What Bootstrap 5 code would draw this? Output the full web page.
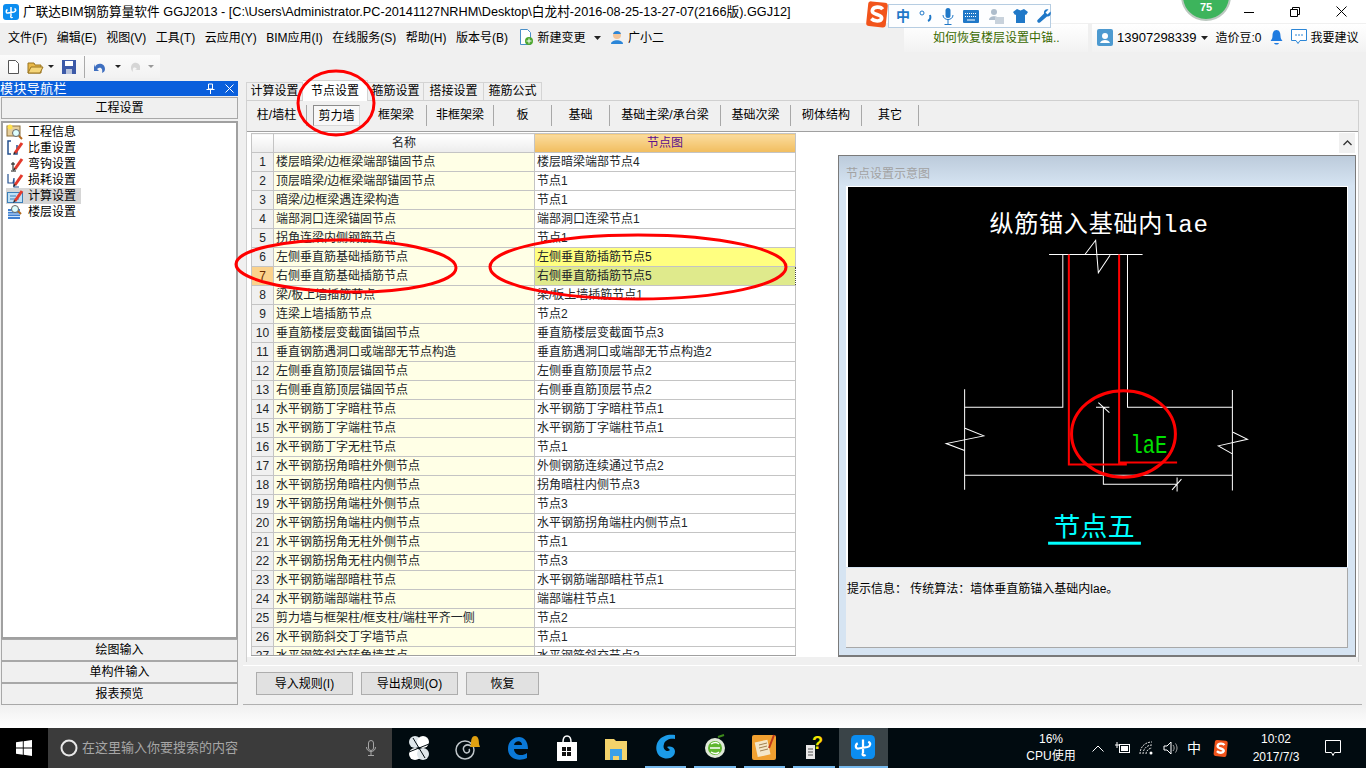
<!DOCTYPE html>
<html lang="zh-CN">
<head>
    <meta charset="UTF-8">
    <title>广联达BIM钢筋算量软件 GGJ2013</title>
    <link href="https://cdn.jsdelivr.net/npm/bootstrap@5.3.3/dist/css/bootstrap.min.css" rel="stylesheet">
    <style>
        html, body { height: 768px; overflow: hidden; }
        body { width: 1366px; background: #f0f0f0; color: #000; font: 12px/16px "Liberation Sans", "Noto Sans CJK SC", sans-serif; position: relative; }
        svg { display: block; flex: none; }

        .title-row { height: 23px; background: #fff; font-size: 12.7px; padding-left: 3px; }
        .win-btn { width: 46px; height: 23px; }
        .win-wrap { margin-right: 2px; }
        .menu-row { height: 29px; padding-left: 8px; column-gap: 9.500px; }
        .hint-box { width: 184px; height: 28px; margin-right: 4px; background: linear-gradient(#fff, #f2f2f2); color: #3a6a00; padding-left: 29px; }
        .user-box { width: 274px; height: 28px; background: linear-gradient(#fff, #f2f2f2); padding-left: 5px; }
        .user-num { font-size: 13px; }
        .tool-row { height: 28px; }
        .tool-inner { height: 23px; width: 160px; margin-top: 3px; background: linear-gradient(#fbfbfb, #f2f2f2); padding-left: 8px; }
        .tool-sep { height: 22px; border-left: 1px solid #aaa; }

        .mid-row { height: 625px; }
        .nav-side { width: 238px; }
        .nav-head { height: 15px; margin-top: 1px; background: #0a5fdc; color: #fff; font-size: 13px; line-height: 15px; letter-spacing: .4px; }
        .nav-close { margin: 0 4px 0 10px; }
        .nav-btn { height: 22px; margin-left: 1px; background: #f0f0f0; border: 1px solid #a8a8a8; line-height: 21px; text-align: center; }
        .nav-top { margin-top: 1px; }
        .nav-list { height: 518px; margin: 2px 0 0 1px; background: #fff; border: 2px solid #a0a0a0; padding: 1px 0 0 3px; }
        .nav-item { height: 16px; line-height: 16px; }
        .nav-item svg { margin-right: 4px; }
        .nav-item span { padding-right: 4px; }
        .nav-on { background: #d6d6d6; width: 75px; }

        .work-side { margin-left: 5px; width: 1119px; }
        .tab-strip { height: 20px; padding: 2px 0 0 3px; display: grid; grid-template-columns: 57px 65px 56px 60px 58px; justify-content: start; }
        .tab-one { height: 18px; border: 1px solid #d4d4d4; border-left: 0; border-bottom: 0; background: #f0f0f0; line-height: 17px; text-align: center; }
        .tab-first { border-left: 1px solid #d4d4d4; }
        .tab-cur { background: #fff; height: 21px; margin-top: -2px; position: relative; z-index: 1; line-height: 20px; }
        .work-panel { height: 562px; margin-left: 3px; width: 1113px; background: #f0f0f0; border: 1px solid #d0d0d0; border-bottom: 0; }
        .sub-strip { height: 31px; background: #f0f0f0; border-bottom: 1px solid #a0a0a0; display: grid; grid-template-columns: 60px 59px 61px 67px 58px 58px 111px 70px 71px 57px; padding-top: 4px; }
        .sub-one { height: 21px; line-height: 21px; text-align: center; border-right: 1px solid #a8a8a8; }
        .sub-cur { width: 47px; justify-self: center; background: #f8f8f8; border: 1px solid #8c8c8c; border-right-color: #d8d8d8; border-bottom-color: #d8d8d8; }
        .work-body { height: 525px; background: #fff; }
        .grid-wrap { width: 545px; height: 523px; margin: 1px 0 0 4px; overflow: hidden; border-bottom: 1px solid #a0a0a0; }
        .node-grid.table { width: 544px; table-layout: fixed; border-collapse: collapse; --bs-table-bg: transparent; border-color: #c4c4c4; }
        .node-grid.table > :not(caption) > * > * { padding: 0 2px; height: 19px; line-height: 18px; font-size: 12px; white-space: nowrap; overflow: hidden; border: 1px solid #c4c4c4; box-shadow: none; }
        .node-grid.table > :not(caption) > * > .num-cell { text-align: center; background: #f0f0f0; padding: 0; }
        .node-grid.table > :not(caption) > * > .num-hot { background: #fbd28c; color: #6a2a00; }
        .node-grid.table > :not(caption) > * > .name-cell { background: #ffffe6; }
        .node-grid.table > :not(caption) > * > .val-six { background: #ffff80; }
        .node-grid.table > :not(caption) > * > .val-seven { background: #dfea8c; border: 1px dotted #444; }
        .node-grid.table > thead > tr > .head-plain { background: linear-gradient(#fff, #ececec); text-align: center; font-weight: 400; }
        .node-grid.table > thead > tr > .head-hot { background: linear-gradient(#fbdc9e, #f1bd5e); color: #5b0f8c; text-align: center; font-weight: 400; }
        .col-num { width: 22px; }
        .col-name { width: 261px; }
        .col-val { width: 261px; }

        .right-part { margin-left: 42px; width: 518px; }
        .scroll-row { height: 23px; padding-right: 1px; }
        .scroll-up { width: 16px; height: 20px; margin-top: 1px; background: #f0f0f0; }
        .demo-box { height: 502px; background: #d6e4f2; border: 1px solid #7a7a7a; border-bottom-width: 2px; padding: 0 7px; }
        .demo-title { height: 30px; margin: 0 -7px; padding: 10px 0 0 7px; line-height: 16px; color: #a2a2a2; background: linear-gradient(#bccbdb, #d6e4f2); }
        .demo-frame { width: 502px; background: #fff; padding: 1px 1px 0 2px; }
        .tip-box { width: 502px; height: 80px; margin-top: 1px; background: #f0f0f0; border-right: 1px solid #a8a8a8; border-bottom: 1px solid #a8a8a8; padding: 13px 0 0 1px; }
        .work-foot { height: 5px; }

        .btn-bar { height: 40px; margin-top: 3px; background: #f0f0f0; border-top: 1px solid #fff; border-bottom: 1px solid #b0b0b0; padding: 6px 0 0 13px; column-gap: 8px; }
        .btn-rule { height: 23px; padding: 0; border-radius: 0; font-size: 12px; line-height: 20px; color: #000; background: #e1e1e1; border: 1px solid #adadad; }
        .btn-wide { width: 97px; }
        .btn-slim { width: 73px; }

        .fade-row { height: 23px; background: linear-gradient(#f0f0f0, #fff); }
        .task-row { height: 40px; background: #010b10; color: #fff; }
        .task-start { width: 48px; background: #000; }
        .task-search { width: 344px; background: #3b3b3b; color: #a6a6a6; font-size: 13px; padding-left: 12px; }
        .task-mic { margin-right: 16px; }
        .task-app { width: 49.4px; height: 40px; }
        .task-open { width: 41.4px; margin: 0 4px; border-bottom: 2px solid #76b9ed; }
        .task-now { background: #3a4448; border-bottom: 2px solid #76b9ed; }
        .task-first { margin-left: 2px; }
        .cpu-box { width: 70px; text-align: center; line-height: 17px; }
        .tray-one { width: 24px; }
        .tray-big { font-size: 14px; }
        .tray-logo { padding-left: 6px; }
        .clock-box { width: 80px; margin-left: 6px; text-align: center; line-height: 18px; }
        .note-box { width: 34px; margin-right: 16px; }

        .ime-bar { position: absolute; left: 888px; top: 4px; width: 163px; height: 24px; background: #fdfeff; border: 1px solid #b6cde2; padding-left: 7px; column-gap: 9px; }
        .ime-zh { color: #1f78c8; font-size: 14px; font-weight: 700; }
        .ime-logo { position: absolute; left: 866px; top: 0; }
        .ball-top { position: absolute; left: 1181px; top: 0; }
        .red-marks { position: absolute; left: 0; top: 0; pointer-events: none; z-index: 5; }
    </style>
</head>
<body class="d-flex flex-column">

    <svg class="d-none">
        <symbol id="app-logo" viewBox="0 0 16 16">
            <rect width="16" height="16" rx="3" fill="#0b8df0"/>
            <path d="M8 3v9M4.5 5.500c-2 1-1.500 4 .5 3.500l6-1c2-.5 2.500-2.500.5-3.500M8 12c-1 1.500 1 2 1.500 1" fill="none" stroke="#fff" stroke-width="1.500"/>
        </symbol>
        <symbol id="red-pen" viewBox="0 0 18 16">
            <path d="M9 13l7-10" stroke="#e33a2c" stroke-width="3"/>
            <path d="M7 15l1-3 2 1z" fill="#222"/>
        </symbol>
        <symbol id="sogou-s" viewBox="0 0 22 28">
            <rect x="1" y="2" width="19" height="24" rx="3" fill="#f2541b" transform="rotate(6 11 14)"/>
            <path d="M16 9c-2-3-9-3-10 1-1 5 10 3 9 8-1 3-7 3-10 0" fill="none" stroke="#fff" stroke-width="3.500"/>
        </symbol>
    </svg>

    <!-- title bar -->
    <div class="title-row d-flex align-items-center flex-none">
        <svg width="16" height="16" class="me-1"><use href="#app-logo"/></svg>
        <span class="text-nowrap">广联达BIM钢筋算量软件 GGJ2013 - [C:\Users\Administrator.PC-20141127NRHM\Desktop\白龙村-2016-08-25-13-27-07(2166版).GGJ12]</span>
        <div class="win-wrap d-flex ms-auto">
            <div class="win-btn d-flex align-items-center justify-content-center"><svg width="10" height="10"><path d="M0 5.500h10" stroke="#000"/></svg></div>
            <div class="win-btn d-flex align-items-center justify-content-center"><svg width="10" height="10"><path d="M.5 2.500h7v7h-7zM2.500 2.500v-2h7v7h-2" fill="none" stroke="#000"/></svg></div>
            <div class="win-btn d-flex align-items-center justify-content-center"><svg width="11" height="11"><path d="M.5.500l10 10M10.500.500l-10 10" stroke="#000"/></svg></div>
        </div>
    </div>

    <!-- menu bar -->
    <div class="menu-row d-flex align-items-center text-nowrap">
        <span>文件(F)</span><span>编辑(E)</span><span>视图(V)</span><span>工具(T)</span><span>云应用(Y)</span><span>BIM应用(I)</span><span>在线服务(S)</span><span>帮助(H)</span><span>版本号(B)</span>
        <span class="d-flex align-items-center gap-1">
            <svg width="16" height="17"><path d="M2.500.500h7l3 3v12h-10z" fill="#fff" stroke="#4a8fc8"/><circle cx="11" cy="12" r="4" fill="#4ea72e"/><path d="M11 9.500v5M8.500 12h5" stroke="#fff"/></svg>
            新建变更
            <svg width="7" height="4" class="ms-1"><path d="M0 0h7l-3.500 4z" fill="#222"/></svg>
        </span>
        <span class="d-flex align-items-center gap-1">
            <svg width="14" height="15"><circle cx="7" cy="5" r="4" fill="#f3c59a"/><path d="M1 14c0-5 12-5 12 0z" fill="#2b86d8"/><path d="M3 4c1-4 7-4 8 0z" fill="#2b86d8"/></svg>
            广小二
        </span>
        <div class="ms-auto d-flex">
            <div class="hint-box d-flex align-items-center">如何恢复楼层设置中锚..</div>
            <div class="user-box d-flex align-items-center">
                <svg width="16" height="17" class="me-1"><rect width="16" height="17" rx="2" fill="#4d9ad0"/><circle cx="8" cy="7" r="3" fill="#fff"/><path d="M3 14c1-4 9-4 10 0z" fill="#fff"/></svg>
                <span class="user-num">13907298339</span>
                <svg width="7" height="4" class="mx-1"><path d="M0 0h7l-3.500 4z" fill="#222"/></svg>
                <span class="ms-1">造价豆:0</span>
                <svg width="13" height="17" class="ms-2"><path d="M6.500 1c-3 0-4 3-4 6 0 3-1.500 4-2 5h12c-.5-1-2-2-2-5 0-3-1-6-4-6z" fill="#1f7be0"/><path d="M4 14c1 2 4 2 5 0z" fill="#1f7be0"/></svg>
                <svg width="16" height="17" class="ms-2"><path d="M.5.500h15v11H9l-2 3-2-3H.5z" fill="#fff" stroke="#2c86d6"/><path d="M4 6h8" stroke="#2c86d6" stroke-dasharray="2 1"/></svg>
                <span class="ms-1">我要建议</span>
            </div>
        </div>
    </div>

    <!-- toolbar -->
    <div class="tool-row">
        <div class="tool-inner d-flex align-items-center">
            <svg width="11" height="14"><path d="M.5.500h7l3 3v10H.5z" fill="#fff" stroke="#555"/></svg>
            <svg width="17" height="14" class="ms-2"><path d="M1 3h6l1 2h6v8H1z" fill="#e9b949" stroke="#9a7420"/><path d="M1 13l3-6h12l-3 6z" fill="#f5d67a" stroke="#9a7420"/></svg>
            <svg width="6" height="3" class="ms-1"><path d="M0 0h6l-3 3z" fill="#222"/></svg>
            <svg width="14" height="14" class="ms-2"><rect width="14" height="14" fill="#3c5aa8"/><rect x="3" y="1" width="8" height="5" fill="#fff"/><rect x="4" y="9" width="6" height="5" fill="#b9c4dc"/></svg>
            <div class="tool-sep ms-2"></div>
            <svg width="14" height="14" class="ms-2"><path d="M2 7c2-5 10-4 10 2 0 2-1 3-3 4 1-4-1-7-5-4l2 2H1V4z" fill="#3f6fc0"/></svg>
            <svg width="6" height="3" class="ms-2"><path d="M0 0h6l-3 3z" fill="#222"/></svg>
            <svg width="11" height="13" class="ms-2"><path d="M11 6C9 1 2 2 2 8c0 2 1 3 2 4-1-4 1-6 4-3L6 10h5z" fill="#d6d6d6"/></svg>
            <svg width="6" height="3" class="ms-2"><path d="M0 0h6l-3 3z" fill="#999"/></svg>
        </div>
    </div>

    <div class="mid-row d-flex">
        <!-- module navigator -->
        <div class="nav-side d-flex flex-column">
            <div class="nav-head d-flex align-items-center">
                <span>模块导航栏</span>
                <svg width="9" height="11" class="ms-auto"><path d="M2.500 1h4v5h-4zM.5 6.500h8M4.500 6.500V11" fill="none" stroke="#fff"/></svg>
                <svg width="9" height="9" class="nav-close"><path d="M.5.500l8 8M8.500.500l-8 8" stroke="#fff"/></svg>
            </div>
            <div class="nav-btn nav-top">工程设置</div>
            <div class="nav-list">
                <div class="nav-item d-flex">
                    <svg width="18" height="16"><rect x="1" y="2" width="13" height="10" fill="#e6cf9c" stroke="#8a6f3a"/><circle cx="4" cy="3" r="2.500" fill="#ffe14d"/><circle cx="10" cy="9" r="3.500" fill="#dff" stroke="#666"/><path d="M13 12l3 3" stroke="#b06a20" stroke-width="2"/></svg>
                    <span>工程信息</span>
                </div>
                <div class="nav-item d-flex">
                    <svg width="18" height="16"><path d="M5 1H2v13h3M8 14h3V5" fill="none" stroke="#24508f" stroke-width="1.500"/><use href="#red-pen" width="18" height="16"/></svg>
                    <span>比重设置</span>
                </div>
                <div class="nav-item d-flex">
                    <svg width="18" height="16"><path d="M7 6v8M5 8h4M5 15h5" stroke="#111"/><use href="#red-pen" width="18" height="16"/></svg>
                    <span>弯钩设置</span>
                </div>
                <div class="nav-item d-flex">
                    <svg width="18" height="16"><path d="M2 2v9h5l1-5v9h5" fill="none" stroke="#24508f" stroke-width="1.200"/><use href="#red-pen" width="18" height="16"/></svg>
                    <span>损耗设置</span>
                </div>
                <div class="nav-item d-flex nav-on">
                    <svg width="18" height="16"><rect x="1.500" y="4.500" width="15" height="10" fill="#bfe0f5" stroke="#3c7fb8"/><path d="M4 8h6M4 11h9" stroke="#3c7fb8"/><use href="#red-pen" width="18" height="16"/></svg>
                    <span>计算设置</span>
                </div>
                <div class="nav-item d-flex">
                    <svg width="18" height="16"><rect x="2" y="5" width="12" height="10" fill="#3f7fd0"/><path d="M2 7.500h12M2 10h12M2 12.500h12" stroke="#cfe6fb"/><circle cx="9" cy="5" r="3.500" fill="#dff" stroke="#666"/><path d="M12 7l3 3" stroke="#b06a20" stroke-width="2"/></svg>
                    <span>楼层设置</span>
                </div>
            </div>
            <div class="nav-btn">绘图输入</div>
            <div class="nav-btn">单构件输入</div>
            <div class="nav-btn">报表预览</div>
        </div>

        <!-- settings -->
        <div class="work-side d-flex flex-column">
            <div class="tab-strip">
                <div class="tab-one tab-first">计算设置</div>
                <div class="tab-one tab-cur">节点设置</div>
                <div class="tab-one">箍筋设置</div>
                <div class="tab-one">搭接设置</div>
                <div class="tab-one">箍筋公式</div>
            </div>
            <div class="work-panel">
                <div class="sub-strip">
                    <div class="sub-one">柱/墙柱</div>
                    <div class="sub-one sub-cur">剪力墙</div>
                    <div class="sub-one">框架梁</div>
                    <div class="sub-one">非框架梁</div>
                    <div class="sub-one">板</div>
                    <div class="sub-one">基础</div>
                    <div class="sub-one">基础主梁/承台梁</div>
                    <div class="sub-one">基础次梁</div>
                    <div class="sub-one">砌体结构</div>
                    <div class="sub-one">其它</div>
                </div>
                <div class="work-body d-flex">
                    <div class="grid-wrap flex-none">
                        <table class="table node-grid mb-0">
                            <colgroup><col class="col-num"><col class="col-name"><col class="col-val"></colgroup>
                            <thead><tr><th class="head-plain"></th><th class="head-plain">名称</th><th class="head-hot">节点图</th></tr></thead>
                            <tbody id="filas"></tbody>
                        </table>
                    </div>
                    <div class="right-part d-flex flex-column">
                        <div class="scroll-row d-flex justify-content-end">
                            <div class="scroll-up d-flex align-items-center justify-content-center"><svg width="9" height="6"><path d="M.5 5l4-4 4 4" fill="none" stroke="#333" stroke-width="1.300"/></svg></div>
                        </div>
                        <div class="demo-box">
                            <div class="demo-title">节点设置示意图</div>
                            <div class="demo-frame">
                                <svg width="499" height="380" viewBox="23 80 1489 1142" preserveAspectRatio="none">
                                    <rect x="23" y="80" width="1489" height="1142" fill="#000"/>
                                    <g fill="none" stroke="#fff" stroke-width="3">
                                        <path d="M623 283H902M730 283L762 240L770 338L805 285"/>
                                        <path d="M664 283V742H371M857 283V742H1170"/>
                                        <path d="M371 688V990M1170 690V992M371 946H1170"/>
                                        <path d="M372 805L428 828L316 851L371 872M1172 817L1215 838L1128 858L1170 882"/>
                                        <path d="M785 742V973H1005M763 742H803M770 728L803 758M1005 953V995M1018 958L990 990"/>
                                    </g>
                                    <g fill="none" stroke="#f00" stroke-width="6">
                                        <path d="M682 283V914H855M832 283V908H1005"/>
                                        <ellipse cx="845" cy="822" rx="155" ry="130" stroke-width="9"/>
                                    </g>
                                    <text x="445" y="216" fill="#fff" font-size="72" textLength="652" font-family="Liberation Mono, Noto Sans CJK SC, monospace">纵筋锚入基础内lae</text>
                                    <text x="866" y="880" fill="#00e000" font-size="78" textLength="110" lengthAdjust="spacingAndGlyphs" font-family="Liberation Mono, monospace">laE</text>
                                    <text x="636" y="1130" fill="#00ffff" font-size="80" textLength="242" font-family="Noto Sans CJK SC, sans-serif">节点五</text>
                                    <rect x="620" y="1146" width="277" height="9" fill="#00ffff"/>
                                </svg>
                            </div>
                            <div class="tip-box">提示信息： 传统算法：墙体垂直筋锚入基础内lae。</div>
                        </div>
                    </div>
                </div>
                <div class="work-foot"></div>
            </div>
            <div class="btn-bar d-flex">
                <button type="button" class="btn btn-rule btn-wide">导入规则(I)</button>
                <button type="button" class="btn btn-rule btn-wide">导出规则(O)</button>
                <button type="button" class="btn btn-rule btn-slim">恢复</button>
            </div>
        </div>
    </div>

    <div class="fade-row"></div>

    <!-- windows taskbar -->
    <div class="task-row d-flex align-items-center">
        <div class="task-start h-100 d-flex align-items-center justify-content-center">
            <svg width="16" height="16"><path d="M0 2.300l6.800-1v6.300H0zM7.700 1.200L16 0v7.600H7.700zM0 8.400h6.800v6.300L0 13.700zM7.700 8.400H16V16l-8.300-1.200z" fill="#fff"/></svg>
        </div>
        <div class="task-search h-100 d-flex align-items-center">
            <svg width="18" height="18" class="me-1 flex-none"><circle cx="9" cy="9" r="7.500" fill="none" stroke="#e8e8e8" stroke-width="2"/></svg>
            <span>在这里输入你要搜索的内容</span>
            <svg width="10" height="16" class="ms-auto task-mic"><rect x="2.500" y=".5" width="5" height="10" rx="2.500" fill="none" stroke="#a6a6a6"/><path d="M.5 7c0 6 9 6 9 0M5 12v3M2 15.500h6" fill="none" stroke="#a6a6a6"/></svg>
        </div>
        <div class="task-app task-first d-flex align-items-center justify-content-center">
            <svg width="22" height="26"><circle cx="7" cy="7" r="6" fill="#dfe6ea"/><circle cx="15" cy="7" r="6" fill="#fff"/><circle cx="7" cy="19" r="6" fill="#fff"/><circle cx="15" cy="19" r="6" fill="#dfe6ea"/><path d="M11 13L5 3M11 13l10-4M11 13l6 10M11 13L1 17" stroke="#010b10"/></svg>
        </div>
        <div class="task-app d-flex align-items-center justify-content-center">
            <svg width="28" height="26"><circle cx="11" cy="15" r="9" fill="none" stroke="#bfc6ca" stroke-width="1.500"/><path d="M17 11c-5-3-9 1-7 5s7 1 5-2" fill="none" stroke="#bfc6ca" stroke-width="1.500"/><path d="M21 1c-3 0-4 3-4 8l-1 3h10l-1-3c0-5-1-8-4-8z" fill="#e0a010"/></svg>
        </div>
        <div class="task-app d-flex align-items-center justify-content-center">
            <svg width="21" height="23"><path d="M1 12C1 3 8 0 12 0c5 0 9 4 9 12H7c0 6 8 8 13 4v5c-8 4-19 1-19-9zM7 8h8c0-5-7-5-8 0z" fill="#0a78d7"/></svg>
        </div>
        <div class="task-app d-flex align-items-center justify-content-center">
            <svg width="22" height="26"><path d="M1 7h20v19H1z" fill="#fff"/><path d="M7 7c0-8 8-8 8 0" fill="none" stroke="#fff" stroke-width="1.500"/><path d="M6 12h4v4H6zM11 12h4v4h-4zM6 17h4v4H6zM11 17h4v4h-4z" fill="#111"/></svg>
        </div>
        <div class="task-app d-flex align-items-center justify-content-center">
            <svg width="22" height="23"><path d="M0 2h9l2 2h11v19H0z" fill="#f3d36b"/><path d="M5 12h12v11h-3v-4H8v4H5z" fill="#3aa0e8"/></svg>
        </div>
        <div class="task-app task-open d-flex align-items-center justify-content-center">
            <svg width="24" height="28"><path d="M21 2C8 0 0 9 3 19c2 7 13 9 17 3 3-5-1-10-7-8l3 3c-3 3-8-1-6-6 1-4 6-6 11-5z" fill="#1b9be8"/></svg>
        </div>
        <div class="task-app task-open d-flex align-items-center justify-content-center">
            <svg width="22" height="26"><circle cx="11" cy="14" r="10" fill="#dfe8d8"/><circle cx="11" cy="14" r="7" fill="#5fb62f"/><path d="M6 14h10M7 10c3-2 6-2 8 0M7 18c3 2 6 2 8 0" fill="none" stroke="#fff" stroke-width="1.500"/><path d="M14 3l6-2" stroke="#3d8a1c" stroke-width="2"/></svg>
        </div>
        <div class="task-app task-open d-flex align-items-center justify-content-center">
            <svg width="24" height="26"><rect y="1" width="24" height="25" rx="2" fill="#f0a030"/><rect x="4" y="7" width="13" height="15" fill="#f4e6c8" transform="rotate(-12 10 14)"/><path d="M7 11l8-2M7 14l8-2M8 17l8-2" stroke="#a08050"/><path d="M17 14l5-13" stroke="#c03a1a" stroke-width="2"/></svg>
        </div>
        <div class="task-app task-open d-flex align-items-center justify-content-center">
            <svg width="18" height="26"><path d="M1 11h9v14H1z" fill="#e8e8e8"/><path d="M3 15h5M3 18h5M3 21h5" stroke="#555"/><text x="7" y="15" font-family="Liberation Sans" font-weight="700" font-size="18" fill="#f5e600">?</text></svg>
        </div>
        <div class="task-app task-now d-flex align-items-center justify-content-center">
            <svg width="24" height="24"><use href="#app-logo" width="24" height="24"/></svg>
        </div>
        <div class="ms-auto d-flex align-items-center">
            <div class="cpu-box">16%<br>CPU使用</div>
            <div class="tray-one d-flex justify-content-center"><svg width="12" height="7"><path d="M.5 6.500l5.500-5.500 5.500 5.500" fill="none" stroke="#fff"/></svg></div>
            <div class="tray-one d-flex justify-content-center"><svg width="16" height="12"><rect x="5.500" y="2.500" width="10" height="8" fill="none" stroke="#fff"/><rect x="7" y="4" width="7" height="5" fill="#fff"/><path d="M1 3h4M3 0v6" stroke="#fff"/></svg></div>
            <div class="tray-one d-flex justify-content-center"><svg width="14" height="14"><path d="M1 13C1 6 6 1 13 1M4 13c0-5 4-9 9-9M7 13c0-3 3-6 6-6" fill="none" stroke="#ddd" stroke-dasharray="2 1"/><circle cx="12" cy="12" r="1.500" fill="#fff"/></svg></div>
            <div class="tray-one d-flex justify-content-center"><svg width="15" height="14"><path d="M1 5h3l4-4v12L4 9H1z" fill="none" stroke="#fff"/><path d="M10 4c1.500 2 1.500 4 0 6M12.500 2.500c2 3 2 6 0 9" fill="none" stroke="#aaa"/></svg></div>
            <div class="tray-one tray-big text-center">中</div>
            <div class="tray-one tray-logo d-flex justify-content-center"><svg width="16" height="19"><use href="#sogou-s" width="16" height="19"/></svg></div>
            <div class="clock-box">10:02<br>2017/7/3</div>
            <div class="note-box d-flex justify-content-center"><svg width="16" height="17"><path d="M.5.500h15v12H9.500l-1.500 3-1.500-3h-6z" fill="none" stroke="#fff"/></svg></div>
        </div>
    </div>

    <!-- things lying over the window: input method bar, badge, hand drawn circles -->
    <div class="ime-bar d-flex align-items-center">
        <span class="ime-zh">中</span>
        <svg width="14" height="14"><circle cx="3" cy="4" r="2" fill="none" stroke="#1f78c8"/><path d="M11 6c1 3 0 5-2 6" fill="none" stroke="#1f78c8" stroke-width="2"/></svg>
        <svg width="12" height="17"><rect x="3.500" y="0" width="5" height="10" rx="2.500" fill="#1f78c8"/><path d="M1 7c0 6 10 6 10 0M6 12v4M2.500 16.500h7" fill="none" stroke="#1f78c8"/></svg>
        <svg width="16" height="13"><rect width="16" height="13" rx="1" fill="#1f78c8"/><path d="M2 3.500h12M2 6.500h12" stroke="#fff" stroke-dasharray="1 1"/><path d="M4 10h8" stroke="#fff"/></svg>
        <svg width="16" height="16"><circle cx="6" cy="4" r="3" fill="#aebdcc"/><path d="M1 12c0-5 10-5 10 0z" fill="#aebdcc"/><rect x="7" y="9" width="9" height="7" fill="#c8d2dc"/></svg>
        <svg width="15" height="14"><path d="M4 0l3.500 1.500L11 0l4 3-2 3-1-.5V14H3V5.500L2 6 0 3z" fill="#1f78c8"/></svg>
        <svg width="14" height="14"><path d="M13.500 2.500l-3 3-2-2 3-3c-3-1-5 1-4.500 4L.5 11c-1 2 1 3.500 2.500 2.500L10 7.500c3 .5 4.500-2 3.500-5z" fill="#1f78c8"/></svg>
    </div>
    <svg class="ime-logo" width="23" height="29"><use href="#sogou-s" width="23" height="29"/></svg>
    <svg class="ball-top" width="50" height="23">
        <circle cx="25" cy="-4" r="24" fill="#3db45c" stroke="#bcc8c0" stroke-width="2"/>
        <text x="25" y="11" text-anchor="middle" font-family="Liberation Sans" font-weight="700" font-size="11" fill="#fff">75</text>
    </svg>
    <svg class="red-marks" width="1366" height="768" fill="none" stroke="#f00" stroke-width="3">
        <ellipse cx="336" cy="103" rx="38" ry="32"/>
        <ellipse cx="346" cy="266" rx="110" ry="26" transform="rotate(1 346 266)"/>
        <ellipse cx="638" cy="267" rx="148" ry="32"/>
    </svg>

<script>
    let filas = [
        ['楼层暗梁/边框梁端部锚固节点', '楼层暗梁端部节点4'],
        ['顶层暗梁/边框梁端部锚固节点', '节点1'],
        ['暗梁/边框梁遇连梁构造', '节点1'],
        ['端部洞口连梁锚固节点', '端部洞口连梁节点1'],
        ['拐角连梁内侧钢筋节点', '节点1'],
        ['左侧垂直筋基础插筋节点', '左侧垂直筋插筋节点5'],
        ['右侧垂直筋基础插筋节点', '右侧垂直筋插筋节点5'],
        ['梁/板上墙插筋节点', '梁/板上墙插筋节点1'],
        ['连梁上墙插筋节点', '节点2'],
        ['垂直筋楼层变截面锚固节点', '垂直筋楼层变截面节点3'],
        ['垂直钢筋遇洞口或端部无节点构造', '垂直筋遇洞口或端部无节点构造2'],
        ['左侧垂直筋顶层锚固节点', '左侧垂直筋顶层节点2'],
        ['右侧垂直筋顶层锚固节点', '右侧垂直筋顶层节点2'],
        ['水平钢筋丁字暗柱节点', '水平钢筋丁字暗柱节点1'],
        ['水平钢筋丁字端柱节点', '水平钢筋丁字端柱节点1'],
        ['水平钢筋丁字无柱节点', '节点1'],
        ['水平钢筋拐角暗柱外侧节点', '外侧钢筋连续通过节点2'],
        ['水平钢筋拐角暗柱内侧节点', '拐角暗柱内侧节点3'],
        ['水平钢筋拐角端柱外侧节点', '节点3'],
        ['水平钢筋拐角端柱内侧节点', '水平钢筋拐角端柱内侧节点1'],
        ['水平钢筋拐角无柱外侧节点', '节点1'],
        ['水平钢筋拐角无柱内侧节点', '节点3'],
        ['水平钢筋端部暗柱节点', '水平钢筋端部暗柱节点1'],
        ['水平钢筋端部端柱节点', '端部端柱节点1'],
        ['剪力墙与框架柱/框支柱/端柱平齐一侧', '节点2'],
        ['水平钢筋斜交丁字墙节点', '节点1'],
        ['水平钢筋斜交转角墙节点', '水平钢筋斜交节点3']
    ];
    let cuerpo = document.getElementById('filas');
    for (let i = 0; i < filas.length; i++) {
        let tr = document.createElement('tr');
        let num = document.createElement('td');
        let nombre = document.createElement('td');
        let valor = document.createElement('td');
        num.className = i == 6 ? 'num-cell num-hot' : 'num-cell';
        nombre.className = 'name-cell';
        if (i == 5) valor.className = 'val-six';
        if (i == 6) valor.className = 'val-seven';
        num.textContent = i + 1;
        nombre.textContent = filas[i][0];
        valor.textContent = filas[i][1];
        tr.appendChild(num);
        tr.appendChild(nombre);
        tr.appendChild(valor);
        cuerpo.appendChild(tr);
    }
</script>
<script src="https://cdn.jsdelivr.net/npm/bootstrap@5.3.3/dist/js/bootstrap.bundle.min.js"></script>
</body>
</html>
